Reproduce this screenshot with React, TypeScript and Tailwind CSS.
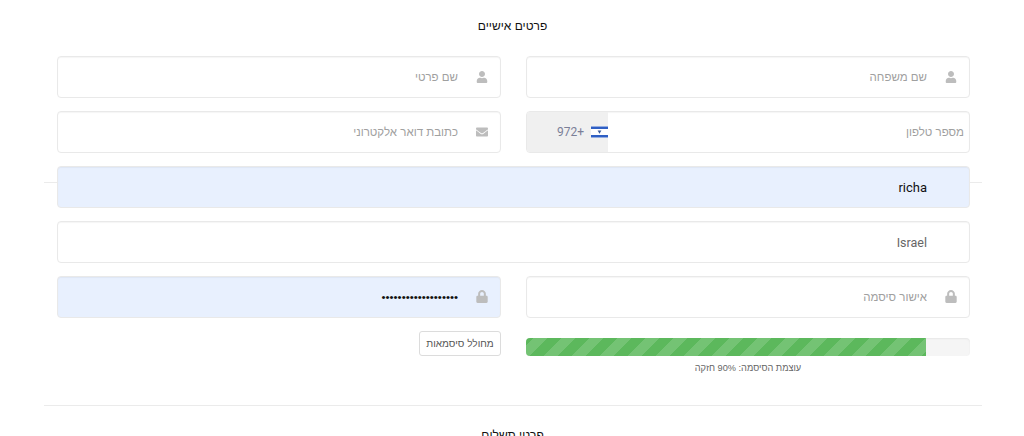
import { FaEnvelope, FaLock, FaUser } from "react-icons/fa";
import type { ReactNode } from "react";

const fieldClass =
  "flex h-[42px] items-center rounded-[4px] border border-[#e9e9e9] shadow-[inset_0_1px_1px_rgba(0,0,0,0.04)]";
const inputClass =
  "h-full min-w-0 flex-1 bg-transparent pr-[42px] text-[11.5px] outline-none placeholder:text-[#a0a0a0]";

interface IconFieldProps {
  icon: ReactNode;
  placeholder: string;
  type?: string;
  value?: string;
  filled?: boolean;
}

function IconField({ icon, placeholder, type = "text", value, filled }: IconFieldProps) {
  return (
    <div className={`${fieldClass} pr-[12px] ${filled ? "bg-[#e8f0fe]" : "bg-white"}`}>
      <span className="mb-[1px] flex w-[12px] shrink-0 justify-center text-[#bdbdbd]">{icon}</span>
      <input
        className={`${inputClass} !pr-[18px] text-[#111] ${filled ? "!text-[11.5px]" : ""}`}
        placeholder={placeholder}
        type={type}
        defaultValue={value}
        readOnly
      />
    </div>
  );
}

function IsraelFlag() {
  return (
    <svg width="17" height="12" viewBox="0 0 17 12" className="shrink-0">
      <rect width="17" height="12" fill="#fff" />
      <rect y="0.5" width="17" height="2.5" fill="#2f5fc4" />
      <rect y="9" width="17" height="2.5" fill="#2f5fc4" />
      <path d="M8.5 7.8 6.6 4.6H10.4Z" fill="#3a5a9c" />
    </svg>
  );
}

export default function App() {
  const strength = 90;

  return (
    <main
      dir="rtl"
      className="h-[436px] overflow-hidden bg-white font-['Liberation_Sans',sans-serif]"
    >
      <div className="relative mr-[42px] w-[938px] pl-[13px] pr-[12px]">
        <div className="absolute inset-x-0 top-[182px] h-px bg-[#ebebeb]" />
        <h2 className="pt-[17px] pr-[2px] text-center text-[12px] leading-[18px] font-normal text-[#111]">
          פרטים אישיים
        </h2>

        <div className="relative mt-[21px] grid grid-cols-2 gap-x-[25px] gap-y-[13px]">
          <IconField icon={<FaUser size={12} />} placeholder="שם משפחה" />
          <IconField icon={<FaUser size={12} />} placeholder="שם פרטי" />

          <div className={`${fieldClass} overflow-hidden bg-white`}>
            <input
              className={`${inputClass} !pr-[5px]`}
              placeholder="מספר טלפון"
              readOnly
            />
            <div className="flex h-full w-[81px] items-center gap-[7px] bg-[#f0f0f0] font-['Roboto'] text-[12px] text-[#7b7f98]">
              <IsraelFlag />
              <span>+972</span>
            </div>
          </div>
          <IconField icon={<FaEnvelope size={12} />} placeholder="כתובת דואר אלקטרוני" />

          <div className={`${fieldClass} col-span-2 bg-[#e8f0fe]`}>
            <input className={`${inputClass} font-['Roboto'] !text-[13px] text-[#111]`} defaultValue="richa" readOnly />
          </div>
          <div className={`${fieldClass} col-span-2 bg-white`}>
            <input className={`${inputClass} font-['Roboto'] !text-[12.5px] text-[#666]`} defaultValue="Israel" readOnly />
          </div>

          <IconField icon={<FaLock size={13} />} placeholder="אישור סיסמה" />
          <IconField icon={<FaLock size={13} />} placeholder="" type="password" value="richa12345678901234" filled />
        </div>

        <div className="mt-[12px] grid grid-cols-2 gap-x-[25px]">
          <div>
            <div
              dir="ltr"
              className="mt-[8px] h-[18px] overflow-hidden rounded-[4px] bg-[#f5f5f5] shadow-[inset_0_1px_2px_rgba(0,0,0,0.06)]"
            >
              <div
                className="h-full bg-[#5cb85c] bg-[linear-gradient(135deg,rgba(255,255,255,.15)_25%,transparent_25%,transparent_50%,rgba(255,255,255,.15)_50%,rgba(255,255,255,.15)_75%,transparent_75%,transparent)] bg-[length:28px_28px] bg-[position:7px_0]"
                style={{ width: `${strength}%` }}
              />
            </div>
            <p className="mt-[5px] text-center text-[9.2px] leading-[14px] text-[#666]">
              עוצמת הסיסמה: {strength}% חזקה
            </p>
          </div>
          <div>
            <button
              type="button"
              className="h-[25px] w-[82px] rounded-[3px] border border-[#dcdcdc] bg-white text-[10px] text-[#555]"
            >
              מחולל סיסמאות
            </button>
          </div>
        </div>

        <div className="mt-[30px] -ml-[13px] -mr-[12px] h-px bg-[#ebebeb]" />
        <h2 className="mt-[20px] pr-[2px] text-center text-[12px] leading-[18px] font-normal text-[#111]">
          פרטי תשלום
        </h2>
      </div>
    </main>
  );
}
